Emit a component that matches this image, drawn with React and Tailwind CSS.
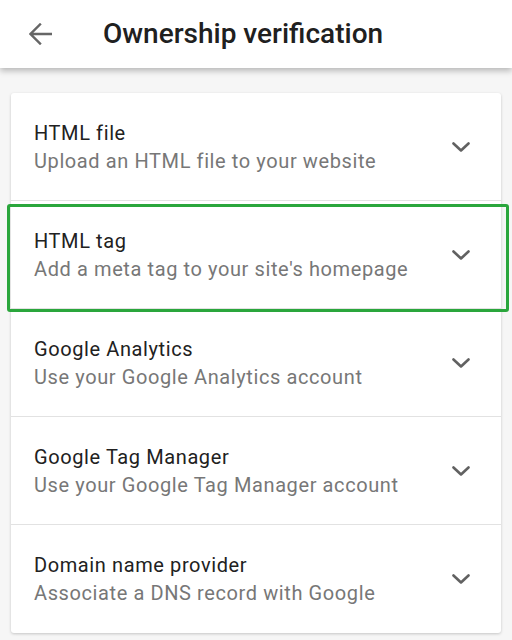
const methods = [
  { title: "HTML file", text: "Upload an HTML file to your website" },
  { title: "HTML tag", text: "Add a meta tag to your site's homepage", active: true },
  { title: "Google Analytics", text: "Use your Google Analytics account" },
  { title: "Google Tag Manager", text: "Use your Google Tag Manager account" },
  { title: "Domain name provider", text: "Associate a DNS record with Google" },
];

function Chevron() {
  return (
    <svg width="18" height="10" viewBox="0 0 18 10" fill="none">
      <polyline
        points="1.5,1.5 9,8.5 16.5,1.5"
        stroke="#616161"
        strokeWidth="2.6"
        strokeLinecap="round"
        strokeLinejoin="round"
      />
    </svg>
  );
}

function MethodRow({ title, text, active, last }) {
  return (
    <div
      className={`relative flex h-[108px] items-center justify-between pl-[23px] pr-[31px] ${
        last ? "" : "border-b border-[#e2e2e2]"
      }`}
    >
      <div className="flex flex-col">
        <span className="text-[20px] leading-[28px] tracking-[0.6px] text-[#212121]">{title}</span>
        <span className="text-[20px] leading-[28px] tracking-[0.6px] text-[#777777]">{text}</span>
      </div>
      <Chevron />
      {active && (
        <div className="absolute -left-[4px] -right-[8px] top-[3px] bottom-[-4px] rounded-[3px] border-[3px] border-[#2aa63c]" />
      )}
    </div>
  );
}

export default function App() {
  return (
    <div
      className="h-[640px] w-[512px] overflow-hidden bg-[#f6f6f6]"
      style={{ fontFamily: "Roboto, 'Liberation Sans', sans-serif" }}
    >
      <header className="relative z-10 flex h-[68px] items-center bg-white pl-[29px] shadow-[0_3px_6px_rgba(0,0,0,0.25)]">
        <svg width="23" height="22" viewBox="0 0 23 22" fill="none">
          <path
            d="M22 11H2M11 1.5L1.5 11L11 20.5"
            stroke="#666666"
            strokeWidth="2.4"
            strokeLinecap="square"
          />
        </svg>
        <h1 className="ml-[51px] text-[28px] font-medium text-[#202020]">
          Ownership verification
        </h1>
      </header>
      <div className="mx-[11px] mt-[25px] rounded-[3px] bg-white shadow-[0_1px_3px_rgba(0,0,0,0.2)]">
        {methods.map((m, i) => (
          <MethodRow key={m.title} {...m} last={i === methods.length - 1} />
        ))}
      </div>
    </div>
  );
}
